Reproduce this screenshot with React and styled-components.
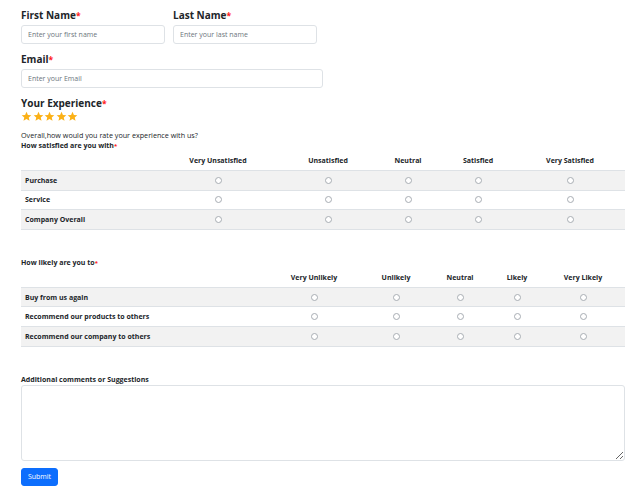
import React from "react";
import styled, { createGlobalStyle } from "styled-components";

const GlobalStyle = createGlobalStyle`
  body {
    margin: 0;
    background: #ffffff;
    font-family: "Open Sans", "Noto Sans", sans-serif;
    color: #212529;
  }
`;

const satisfactionCols = ["Very Unsatisfied", "Unsatisfied", "Neutral", "Satisfied", "Very Satisfied"];
const satisfactionRows = ["Purchase", "Service", "Company Overall"];
const satisfactionWidths = [134, 126, 94, 66, 74, 110];

const likelyCols = ["Very Unlikely", "Unlikely", "Neutral", "Likely", "Very Likely"];
const likelyRows = ["Buy from us again", "Recommend our products to others", "Recommend our company to others"];
const likelyWidths = [242, 102, 62, 66, 48, 84];

export default function App() {
  return (
    <>
      <GlobalStyle />
      <Page>
        <NameRow>
          <Field>
            <Label>
              First Name<Req>*</Req>
            </Label>
            <Input width="144px" placeholder="Enter your first name" />
          </Field>
          <Field>
            <Label>
              Last Name<Req>*</Req>
            </Label>
            <Input width="144px" placeholder="Enter your last name" />
          </Field>
        </NameRow>

        <Field>
          <Label>
            Email<Req>*</Req>
          </Label>
          <Input width="302px" placeholder="Enter your Email" />
        </Field>

        <Field>
          <Label>
            Your Experience<Req>*</Req>
          </Label>
          <Stars>
            {[0, 1, 2, 3, 4].map((i) => (
              <svg key={i} width="11" height="11" viewBox="0 0 24 24">
                <path
                  d="M12 1.5l3.1 7 7.4.6-5.6 4.9 1.7 7.4L12 17.5l-6.6 3.9 1.7-7.4L1.5 9.1l7.4-.6z"
                  fill="#fbb117"
                />
              </svg>
            ))}
          </Stars>
        </Field>

        <Intro>Overall,how would you rate your experience with us?</Intro>
        <Question>
          How satisfied are you with<Req>*</Req>
        </Question>
        <Survey cols={satisfactionCols} rows={satisfactionRows} widths={satisfactionWidths} name="sat" />

        <Question $top="27px">
          How likely are you to<Req>*</Req>
        </Question>
        <Survey cols={likelyCols} rows={likelyRows} widths={likelyWidths} name="lik" />

        <CommentLabel>Additional comments or Suggestions</CommentLabel>
        <Comments />
        <SubmitButton type="button">Submit</SubmitButton>
      </Page>
    </>
  );
}

function Survey({ cols, rows, widths, name }) {
  return (
    <Table>
      <colgroup>
        {widths.map((w, i) => (
          <col key={i} style={{ width: w }} />
        ))}
      </colgroup>
      <thead>
        <tr>
          <HeadCell />
          {cols.map((c) => (
            <HeadCell key={c}>{c}</HeadCell>
          ))}
        </tr>
      </thead>
      <tbody>
        {rows.map((r, ri) => (
          <BodyRow key={r} $striped={ri % 2 === 0}>
            <RowLabel>{r}</RowLabel>
            {cols.map((c) => (
              <RadioCell key={c}>
                <Radio type="radio" name={`${name}-${ri}`} />
              </RadioCell>
            ))}
          </BodyRow>
        ))}
      </tbody>
    </Table>
  );
}

const Page = styled.div`
  padding: 8px 17px 14px 21px;
  display: flex;
  flex-direction: column;
  align-items: flex-start;
`;

const NameRow = styled.div`
  display: flex;
  gap: 8px;
`;

const Field = styled.div`
  display: flex;
  flex-direction: column;
  margin-bottom: 8px;
`;

const Label = styled.label`
  font-size: 10px;
  font-weight: 700;
  line-height: 14px;
  margin-bottom: 3px;
`;

const Req = styled.span`
  color: #ff1a1a;
  font-size: 0.85em;
  line-height: 0;
`;

const Input = styled.input`
  box-sizing: border-box;
  width: ${(p) => p.width};
  height: 19px;
  padding: 0 6px;
  border: 1px solid #dee2e6;
  border-radius: 3px;
  font-family: inherit;
  font-size: 7px;
  color: #212529;
  outline: none;
  &::placeholder {
    color: #6c757d;
  }
`;

const Stars = styled.div`
  display: flex;
  gap: 0.5px;
  margin-top: -2px;
`;

const Intro = styled.div`
  font-size: 7.2px;
  line-height: 10px;
  margin-top: 0;
`;

const Question = styled.div`
  font-size: 7px;
  font-weight: 700;
  line-height: 11px;
  margin-top: ${(p) => p.$top || "0"};
`;

const Table = styled.table`
  width: 604px;
  border-collapse: collapse;
  table-layout: fixed;
`;

const HeadCell = styled.th`
  height: 19px;
  padding: 0 4px;
  font-size: 7px;
  font-weight: 700;
  text-align: center;
  vertical-align: middle;
  border-bottom: 1px solid #dee2e6;
  white-space: nowrap;
`;

const BodyRow = styled.tr`
  background: ${(p) => (p.$striped ? "#f2f2f2" : "#ffffff")};
  border-bottom: 1px solid #dee2e6;
`;

const RowLabel = styled.td`
  height: 18.6px;
  padding: 0 4px;
  font-size: 7px;
  font-weight: 700;
  white-space: nowrap;
  vertical-align: middle;
`;

const RadioCell = styled.td`
  text-align: center;
  vertical-align: middle;
  padding: 0;
  line-height: 0;
`;

const Radio = styled.input`
  appearance: none;
  width: 7px;
  height: 7px;
  margin: 0;
  border: 1px solid #a8adb3;
  border-radius: 50%;
  background: #ffffff;
`;

const CommentLabel = styled.div`
  margin-top: 28px;
  font-size: 7px;
  font-weight: 700;
  line-height: 10px;
`;

const Comments = styled.textarea`
  box-sizing: border-box;
  width: 604px;
  height: 76px;
  margin: 0 0 7px;
  border: 1px solid #dee2e6;
  border-radius: 3px;
  font-family: inherit;
  outline: none;
`;

const SubmitButton = styled.button`
  box-sizing: border-box;
  width: 37px;
  height: 18px;
  padding: 0;
  border: 1px solid #0d6efd;
  border-radius: 3px;
  background: #0d6efd;
  color: #ffffff;
  font-family: inherit;
  font-size: 7px;
`;
